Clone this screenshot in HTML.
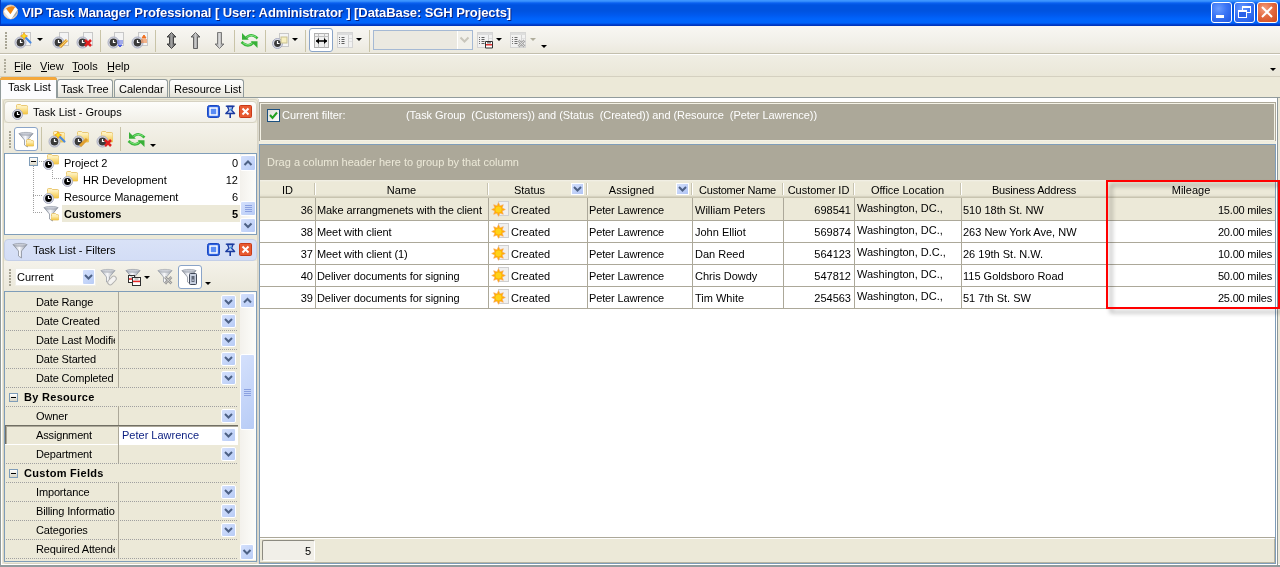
<!DOCTYPE html><html><head><meta charset="utf-8"><style>
*{box-sizing:border-box}
html,body{margin:0;padding:0;width:1280px;height:567px;overflow:hidden;background:#ECE9D8;font-family:"Liberation Sans", sans-serif;font-size:11px;color:#000}
.abs,.ic,.t{position:absolute}
.t{white-space:pre;line-height:13px;letter-spacing:0px;will-change:transform}
.ic{overflow:visible}
</style></head><body>
<svg width="0" height="0" style="position:absolute"><defs>
<linearGradient id="gfold" x1="0" y1="0" x2="0" y2="1"><stop offset="0" stop-color="#fff6d0"/><stop offset="1" stop-color="#f6d878"/></linearGradient>
<linearGradient id="gfold2" x1="0" y1="0" x2="0" y2="1"><stop offset="0" stop-color="#fff0b8"/><stop offset="1" stop-color="#f2c440"/></linearGradient>
<linearGradient id="gfun" x1="0" y1="0" x2="1" y2="0"><stop offset="0" stop-color="#9aa2b0"/><stop offset="0.45" stop-color="#fafbff"/><stop offset="1" stop-color="#8890a0"/></linearGradient>
</defs></svg>
<div class="abs" style="left:0;top:0;width:1280px;height:26px;background:linear-gradient(#3d95ff 0px,#3d95ff 1px,#0a60f0 3px,#0053e0 5px,#0053e0 11px,#0059ee 15px,#0064fc 19px,#0064fa 23px,#0040d0 24.5px,#0030b0 26px)"></div>
<div class="abs" style="left:0;top:0;width:1px;height:26px;background:#0038c0"></div>
<svg class="ic" style="left:3px;top:4px" width="15" height="16" viewBox="0 0 15 16" ><circle cx="7.5" cy="8" r="7" fill="#e4e0dc" stroke="#f4c89c" stroke-width="0.8"/><path d="M13.5 6.5 L8.5 14.5 Q12.5 13 14.2 9z" fill="#a8a8a8"/><path d="M2.2 6.2 L7.5 13 L13.2 4.2" stroke="#fff" stroke-width="3.6" fill="none" stroke-linejoin="round"/><path d="M3 4.5 Q7 1 12.2 2.8 L7.5 10.2z" fill="#f08a18"/></svg>
<div class="t" style="left:22px;top:6px;font-weight:bold;font-size:13px;color:#fff;letter-spacing:-0.08px;text-shadow:1px 1px 0 #0a1e78">VIP Task Manager Professional [ User: Administrator ] [DataBase: SGH Projects]</div>
<div class="abs" style="left:1211px;top:2px;width:21px;height:21px;border:1px solid #fff;border-radius:3px;background:radial-gradient(circle at 35% 30%,#6a9cff 0,#3a74f5 45%,#1e57e0 100%)"></div>
<svg class="ic" style="left:1211px;top:2px" width="21" height="21" viewBox="0 0 21 21" ><rect x="5" y="13" width="8" height="3" fill="#fff"/></svg>
<div class="abs" style="left:1234px;top:2px;width:21px;height:21px;border:1px solid #fff;border-radius:3px;background:radial-gradient(circle at 35% 30%,#6a9cff 0,#3a74f5 45%,#1e57e0 100%)"></div>
<svg class="ic" style="left:1234px;top:2px" width="21" height="21" viewBox="0 0 21 21" ><rect x="8.5" y="4.5" width="8" height="6" fill="none" stroke="#fff" stroke-width="1"/><rect x="8" y="4" width="9" height="2" fill="#fff"/><rect x="4.5" y="8.5" width="8" height="7" fill="#2a62e8" stroke="#fff"/><rect x="4" y="8" width="9" height="2" fill="#fff"/></svg>
<div class="abs" style="left:1257px;top:2px;width:21px;height:21px;border:1px solid #fff;border-radius:3px;background:radial-gradient(circle at 35% 30%,#f4a080 0,#e36a40 45%,#cf4a1c 100%)"></div>
<svg class="ic" style="left:1257px;top:2px" width="21" height="21" viewBox="0 0 21 21" ><path d="M5 5l10 10M15 5l-10 10" stroke="#fff" stroke-width="2"/></svg>
<div class="abs" style="left:0;top:26px;width:1280px;height:28px;background:linear-gradient(#f8f7f3,#f1efe8 60%,#ebe8dc)"></div>
<div class="abs" style="left:0;top:53px;width:1280px;height:1px;background:#c3bfae"></div>
<div class="abs" style="left:0;top:54px;width:1280px;height:1px;background:#fff"></div>
<div class="abs" style="left:5px;top:32px;width:2px;height:2px;background:#a8a595"></div>
<div class="abs" style="left:5px;top:35px;width:2px;height:2px;background:#a8a595"></div>
<div class="abs" style="left:5px;top:38px;width:2px;height:2px;background:#a8a595"></div>
<div class="abs" style="left:5px;top:41px;width:2px;height:2px;background:#a8a595"></div>
<div class="abs" style="left:5px;top:44px;width:2px;height:2px;background:#a8a595"></div>
<div class="abs" style="left:5px;top:47px;width:2px;height:2px;background:#a8a595"></div>
<svg class="ic" style="left:14px;top:32px" width="17" height="17" viewBox="0 0 17 17" ><rect x="7.5" y="0.5" width="9" height="13" fill="#f4f4f4" stroke="#c8c8c8"/><circle cx="6.5" cy="10.5" r="5.5" fill="#dcdee8" stroke="#a8acc0" stroke-width="1"/><circle cx="6.5" cy="10.5" r="3.9" fill="#3a3a3a"/><path d="M6.5 8V10.5H8.5" stroke="#fff" stroke-width="1.2" fill="none"/><path d="M12 6l4.5 4.5" stroke="#4a8ae0" stroke-width="2.2" stroke-linecap="round"/><path d="M10 0.5l1.2 2.3 2.3 1.2-2.3 1.2-1.2 2.3-1.2-2.3-2.3-1.2 2.3-1.2z" fill="#f8e020" stroke="#f09020" stroke-width=".7"/></svg>
<div class="abs" style="left:37px;top:38px;width:0;height:0;border-left:3px solid transparent;border-right:3px solid transparent;border-top:3px solid #000"></div>
<svg class="ic" style="left:52px;top:32px" width="17" height="17" viewBox="0 0 17 17" ><rect x="7.5" y="0.5" width="9" height="13" fill="#f4f4f4" stroke="#c8c8c8"/><circle cx="6.5" cy="10.5" r="5.5" fill="#dcdee8" stroke="#a8acc0" stroke-width="1"/><circle cx="6.5" cy="10.5" r="3.9" fill="#3a3a3a"/><path d="M6.5 8V10.5H8.5" stroke="#fff" stroke-width="1.2" fill="none"/><path d="M8 15l7-7" stroke="#e0a030" stroke-width="3"/><path d="M8 15l7-7" stroke="#f8d070" stroke-width="1"/></svg>
<svg class="ic" style="left:76px;top:32px" width="17" height="17" viewBox="0 0 17 17" ><rect x="7.5" y="0.5" width="9" height="13" fill="#f4f4f4" stroke="#c8c8c8"/><circle cx="6.5" cy="10.5" r="5.5" fill="#dcdee8" stroke="#a8acc0" stroke-width="1"/><circle cx="6.5" cy="10.5" r="3.9" fill="#3a3a3a"/><path d="M6.5 8V10.5H8.5" stroke="#fff" stroke-width="1.2" fill="none"/><path d="M9 8l6 6M15 8l-6 6" stroke="#e02020" stroke-width="2.5"/></svg>
<div class="abs" style="left:100px;top:30px;width:1px;height:22px;background:#c9c4a8"></div>
<svg class="ic" style="left:107px;top:32px" width="17" height="17" viewBox="0 0 17 17" ><rect x="7.5" y="0.5" width="9" height="13" fill="#f4f4f4" stroke="#c8c8c8"/><circle cx="6.5" cy="10.5" r="5.5" fill="#dcdee8" stroke="#a8acc0" stroke-width="1"/><circle cx="6.5" cy="10.5" r="3.9" fill="#3a3a3a"/><path d="M6.5 8V10.5H8.5" stroke="#fff" stroke-width="1.2" fill="none"/><path d="M10 9h6M10 11h6M11 13h4l-2 2z" stroke="#5060e0" stroke-width="1" fill="#5060e0"/></svg>
<svg class="ic" style="left:131px;top:32px" width="17" height="17" viewBox="0 0 17 17" ><rect x="7.5" y="0.5" width="9" height="13" fill="#f4f4f4" stroke="#c8c8c8"/><circle cx="6.5" cy="10.5" r="5.5" fill="#dcdee8" stroke="#a8acc0" stroke-width="1"/><circle cx="6.5" cy="10.5" r="3.9" fill="#3a3a3a"/><path d="M6.5 8V10.5H8.5" stroke="#fff" stroke-width="1.2" fill="none"/><path d="M10 8h6M10 10h6M11 6h4l-2 -3z" stroke="#f07020" stroke-width="1" fill="#f07020"/></svg>
<div class="abs" style="left:155px;top:30px;width:1px;height:22px;background:#c9c4a8"></div>
<svg class="ic" style="left:166px;top:32px" width="11" height="17" viewBox="0 0 11 17" ><defs><linearGradient id="g1" x1="0" x2="1"><stop offset="0" stop-color="#505050"/><stop offset="0.5" stop-color="#a0a0a0"/><stop offset="1" stop-color="#404040"/></linearGradient></defs><path d="M5.5 0.5L10 5H7.5V12H10L5.5 16.5 1 12H3.5V5H1Z" fill="url(#g1)" stroke="#383838" stroke-width="0.9"/></svg>
<svg class="ic" style="left:190px;top:32px" width="11" height="17" viewBox="0 0 11 17" ><defs><linearGradient id="g2" x1="0" x2="1"><stop offset="0" stop-color="#707070"/><stop offset="0.5" stop-color="#c8c8c8"/><stop offset="1" stop-color="#606060"/></linearGradient></defs><path d="M5.5 0.5L10 5H7.5V16.5H3.5V5H1Z" fill="url(#g2)" stroke="#585858" stroke-width="0.9"/></svg>
<svg class="ic" style="left:214px;top:32px" width="11" height="17" viewBox="0 0 11 17" ><defs><linearGradient id="g3" x1="0" x2="1"><stop offset="0" stop-color="#888"/><stop offset="0.5" stop-color="#d8d8d8"/><stop offset="1" stop-color="#808080"/></linearGradient></defs><path d="M5.5 16.5L10 12H7.5V0.5H3.5V12H1Z" fill="url(#g3)" stroke="#707070" stroke-width="0.9"/></svg>
<div class="abs" style="left:234px;top:30px;width:1px;height:22px;background:#c9c4a8"></div>
<svg class="ic" style="left:241px;top:32px" width="17" height="17" viewBox="0 0 17 17" ><path d="M4.5 6.5Q10 0 16.5 6.5" stroke="#3cb83c" stroke-width="2.6" fill="none"/><path d="M5 5.8Q10 1.5 15 5" stroke="#90f090" stroke-width="0.8" fill="none"/><path d="M1 1V7.8H7.8Z" fill="#38b038"/><path d="M0.5 10Q7 16.5 12.5 10.5" stroke="#3cb83c" stroke-width="2.6" fill="none"/><path d="M2 10.8Q7 15 11.5 11" stroke="#90f090" stroke-width="0.8" fill="none"/><path d="M16.5 16V9.2H9.7Z" fill="#38b038"/></svg>
<div class="abs" style="left:265px;top:30px;width:1px;height:22px;background:#c9c4a8"></div>
<svg class="ic" style="left:272px;top:32px" width="17" height="17" viewBox="0 0 17 17" ><rect x="7.5" y="1.5" width="9" height="13" fill="#f4f4f4" stroke="#c8c8c8"/><circle cx="5.5" cy="11.5" r="5" fill="#dcdee8" stroke="#a8acc0" stroke-width="1"/><circle cx="5.5" cy="11.5" r="3.4" fill="#3a3a3a"/><path d="M5.5 9V11.5H7.5" stroke="#fff" stroke-width="1.2" fill="none"/><rect x="9" y="5" width="6" height="6" fill="#f8f0c0" stroke="#c8c090"/></svg>
<div class="abs" style="left:292px;top:38px;width:0;height:0;border-left:3px solid transparent;border-right:3px solid transparent;border-top:3px solid #000"></div>
<div class="abs" style="left:305px;top:30px;width:1px;height:22px;background:#c9c4a8"></div>
<div class="abs" style="left:309px;top:28px;width:24px;height:24px;border:1px solid #8aa4c8;border-radius:3px;background:#fff"></div>
<svg class="ic" style="left:313px;top:32px" width="17" height="17" viewBox="0 0 17 17" ><rect x="1.5" y="1.5" width="14" height="14" fill="#f0f0f0" stroke="#b0b0b0"/><path d="M1.5 4.5h14M5.5 1.5v14M11.5 1.5v14" stroke="#c0c0c0"/><path d="M3 9h11" stroke="#000" stroke-width="1.5"/><path d="M3 9l3-3v6zM14 9l-3-3v6z" fill="#000"/></svg>
<svg class="ic" style="left:337px;top:32px" width="17" height="17" viewBox="0 0 17 17" ><rect x="0.5" y="0.5" width="15" height="15" fill="#f2f2f2" stroke="#d4d4d4"/><rect x="1" y="1" width="14" height="2" fill="#dcdcdc"/><path d="M11.5 3v12" stroke="#d0d0d0"/><path d="M12 6.5h3M12 9.5h3" stroke="#e0e0e0"/><path d="M2 5.5h1M2 7.5h1M2 9.5h1M2 11.5h1" stroke="#707070"/><path d="M4.5 5.5h3M4.5 7.5h3M4.5 9.5h3M4.5 11.5h3" stroke="#606060" stroke-width="1.2"/></svg>
<div class="abs" style="left:356px;top:38px;width:0;height:0;border-left:3px solid transparent;border-right:3px solid transparent;border-top:3px solid #000"></div>
<div class="abs" style="left:369px;top:30px;width:1px;height:22px;background:#c9c4a8"></div>
<div class="abs" style="left:373px;top:30px;width:100px;height:20px;border:1px solid #a5b9d4;background:#ebe9e1"></div>
<div class="abs" style="left:457px;top:31px;width:15px;height:18px;background:#f1f0ea;border-left:1px solid #fff"></div>
<svg class="ic" style="left:459px;top:36px" width="11" height="8" viewBox="0 0 11 8" ><path d="M1.5 1.5l4 4 4-4" stroke="#c8c6bc" stroke-width="2" fill="none"/></svg>
<svg class="ic" style="left:477px;top:32px" width="17" height="17" viewBox="0 0 17 17" ><rect x="0.5" y="0.5" width="15" height="15" fill="#f2f2f2" stroke="#d4d4d4"/><rect x="1" y="1" width="14" height="2" fill="#dcdcdc"/><path d="M11.5 3v12" stroke="#d0d0d0"/><path d="M12 6.5h3M12 9.5h3" stroke="#e0e0e0"/><path d="M2 5.5h1M2 7.5h1M2 9.5h1M2 11.5h1" stroke="#707070"/><path d="M4.5 5.5h3M4.5 7.5h3M4.5 9.5h3M4.5 11.5h3" stroke="#606060" stroke-width="1.2"/><path d="M8.5 16V9.5H15.5V16Z" fill="#fff" stroke="#303030"/><rect x="9" y="12" width="6" height="1.5" fill="#e03030"/><rect x="10" y="10" width="4" height="1.5" fill="#808080"/></svg>
<div class="abs" style="left:496px;top:38px;width:0;height:0;border-left:3px solid transparent;border-right:3px solid transparent;border-top:3px solid #000"></div>
<svg class="ic" style="left:510px;top:32px" width="17" height="17" viewBox="0 0 17 17" opacity="0.9"><rect x="0.5" y="0.5" width="15" height="15" fill="#f2f2f2" stroke="#d4d4d4"/><rect x="1" y="1" width="14" height="2" fill="#dcdcdc"/><path d="M11.5 3v12" stroke="#d0d0d0"/><path d="M12 6.5h3M12 9.5h3" stroke="#e0e0e0"/><path d="M2 5.5h1M2 7.5h1M2 9.5h1M2 11.5h1" stroke="#707070"/><path d="M4.5 5.5h3M4.5 7.5h3M4.5 9.5h3M4.5 11.5h3" stroke="#606060" stroke-width="1.2"/><path d="M8.5 8.5l6 6M14.5 8.5l-6 6" stroke="#a0a0a0" stroke-width="2.6"/><path d="M8.5 8.5l6 6M14.5 8.5l-6 6" stroke="#e8e8e8" stroke-width="0.8"/></svg>
<div class="abs" style="left:530px;top:38px;width:0;height:0;border-left:3px solid transparent;border-right:3px solid transparent;border-top:3px solid #b0ad9c"></div>
<div class="abs" style="left:541px;top:45px;width:0;height:0;border-left:3px solid transparent;border-right:3px solid transparent;border-top:3px solid #000"></div>
<div class="abs" style="left:0;top:55px;width:1280px;height:21px;background:linear-gradient(#f0eee4,#eae7d8)"></div>
<div class="abs" style="left:0;top:76px;width:1280px;height:1px;background:#d4d0c0"></div>
<div class="abs" style="left:4px;top:59px;width:2px;height:2px;background:#b0ad9c"></div>
<div class="abs" style="left:4px;top:62px;width:2px;height:2px;background:#b0ad9c"></div>
<div class="abs" style="left:4px;top:65px;width:2px;height:2px;background:#b0ad9c"></div>
<div class="abs" style="left:4px;top:68px;width:2px;height:2px;background:#b0ad9c"></div>
<div class="abs" style="left:4px;top:71px;width:2px;height:2px;background:#b0ad9c"></div>
<div class="t" style="left:14px;top:60px">File</div>
<div class="abs" style="left:15px;top:71px;width:6px;height:1px;background:#000"></div>
<div class="t" style="left:40px;top:60px">View</div>
<div class="abs" style="left:41px;top:71px;width:6px;height:1px;background:#000"></div>
<div class="t" style="left:72px;top:60px">Tools</div>
<div class="abs" style="left:73px;top:71px;width:6px;height:1px;background:#000"></div>
<div class="t" style="left:107px;top:60px">Help</div>
<div class="abs" style="left:108px;top:71px;width:6px;height:1px;background:#000"></div>
<div class="abs" style="left:1270px;top:68px;width:0;height:0;border-left:3px solid transparent;border-right:3px solid transparent;border-top:3px solid #000"></div>
<div class="abs" style="left:0;top:97px;width:1280px;height:1px;background:#919b9c"></div>

<div class="abs" style="left:57px;top:79px;width:56px;height:18px;background:linear-gradient(#fefefe,#f3f2ec 60%,#e4e2d8);border:1px solid #919b9c;border-bottom:none;border-radius:3px 3px 0 0"></div>
<div class="abs" style="left:114px;top:79px;width:54px;height:18px;background:linear-gradient(#fefefe,#f3f2ec 60%,#e4e2d8);border:1px solid #919b9c;border-bottom:none;border-radius:3px 3px 0 0"></div>
<div class="abs" style="left:169px;top:79px;width:75px;height:18px;background:linear-gradient(#fefefe,#f3f2ec 60%,#e4e2d8);border:1px solid #919b9c;border-bottom:none;border-radius:3px 3px 0 0"></div>
<div class="abs" style="left:0px;top:77px;width:57px;height:21px;background:#fcfcfe;border:1px solid #919b9c;border-bottom:none;border-radius:3px 3px 0 0"></div>
<div class="abs" style="left:0px;top:77px;width:57px;height:3px;background:#f4a83a;border-radius:3px 3px 0 0"></div>
<div class="abs" style="left:1px;top:97px;width:55px;height:2px;background:#fcfcfe"></div>
<div class="t" style="left:8px;top:81px">Task List</div>
<div class="t" style="left:61px;top:83px">Task Tree</div>
<div class="t" style="left:119px;top:83px">Calendar</div>
<div class="t" style="left:174px;top:83px">Resource List</div>
<div class="abs" style="left:0;top:98px;width:1px;height:469px;background:#919b9c"></div>
<div class="abs" style="left:1px;top:98px;width:1px;height:467px;background:#fff"></div>
<div class="abs" style="left:0;top:565px;width:1280px;height:2px;background:#919b9c"></div>
<div class="abs" style="left:1px;top:564px;width:1279px;height:1px;background:#fff"></div>
<div class="abs" style="left:3px;top:99px;width:255px;height:465px;border:1px solid #d8d4c4;border-radius:3px"></div>
<div class="abs" style="left:4px;top:101px;width:253px;height:22px;border:1px solid #d6d2c2;border-radius:4px;background:linear-gradient(#fdfdfb,#f1efe7)"></div>
<svg class="ic" style="left:12px;top:104px" width="17" height="17" viewBox="0 0 17 17" ><path d="M4.5 10V1.5Q4.5 0.5 5.5 0.5H8.5L9.5 1.5H14.5Q15.5 1.5 15.5 2.5V10Z" fill="url(#gfold)" stroke="#e4bc58" stroke-width="0.8"/><rect x="4.5" y="3" width="11" height="7" fill="url(#gfold2)" rx="0.5"/><circle cx="5.5" cy="10.5" r="5" fill="#dcdee8" stroke="#a8acc0" stroke-width="1"/><circle cx="5.5" cy="10.5" r="3.4" fill="#000"/><path d="M5.5 8V10.5H7.5" stroke="#fff" stroke-width="1.2" fill="none"/></svg>
<div class="t" style="left:33px;top:106px">Task List - Groups</div>
<svg class="ic" style="left:207px;top:105px" width="13" height="13" viewBox="0 0 13 13" ><rect x="0.5" y="0.5" width="12" height="12" rx="2" fill="#2c62e0" stroke="#1c48c0"/><rect x="3" y="3" width="7" height="7" fill="#5a8cf4" stroke="#fff" stroke-width="1.5"/></svg>
<svg class="ic" style="left:224px;top:105px" width="12" height="13" viewBox="0 0 12 13" ><path d="M3.5 1.5L5 5.2 1.8 8.5H10.6L7.6 5.2 9 1.5Z" fill="#c8d8f8" stroke="#1a3aa0" stroke-width="1.3" stroke-linejoin="round"/><path d="M1.8 1.2H10.6" stroke="#1a3aa0" stroke-width="1.4"/><path d="M6.2 8.5V13" stroke="#1a3aa0" stroke-width="1.6"/><circle cx="6.8" cy="4.5" r="1" fill="#40a0e0"/></svg>
<svg class="ic" style="left:239px;top:105px" width="13" height="13" viewBox="0 0 13 13" ><rect x="0.5" y="0.5" width="12" height="12" rx="1" fill="#e85a30" stroke="#c83a18"/><path d="M3.5 3.5l6 6M9.5 3.5l-6 6" stroke="#fff" stroke-width="2"/></svg>
<div class="abs" style="left:4px;top:123px;width:253px;height:30px;background:linear-gradient(#f4f2ea,#ebe8da)"></div>
<div class="abs" style="left:9px;top:131px;width:2px;height:2px;background:#a8a595"></div>
<div class="abs" style="left:9px;top:134px;width:2px;height:2px;background:#a8a595"></div>
<div class="abs" style="left:9px;top:137px;width:2px;height:2px;background:#a8a595"></div>
<div class="abs" style="left:9px;top:140px;width:2px;height:2px;background:#a8a595"></div>
<div class="abs" style="left:9px;top:143px;width:2px;height:2px;background:#a8a595"></div>
<div class="abs" style="left:9px;top:146px;width:2px;height:2px;background:#a8a595"></div>
<div class="abs" style="left:14px;top:127px;width:24px;height:24px;border:1px solid #8aa4c8;border-radius:3px;background:#fff"></div>
<svg class="ic" style="left:18px;top:131px" width="17" height="17" viewBox="0 0 17 17" ><path d="M1 2.5H15L9.5 9V16L6.5 14V9Z" fill="url(#gfun)" stroke="#8a909c" stroke-width="0.8"/><ellipse cx="8" cy="2.8" rx="6.8" ry="1.4" fill="#c8ccd6" stroke="#8a909c" stroke-width="0.6"/><path d="M8.5 15V9.5Q8.5 8.5 9.5 8.5H12.5L13.5 9.5H14.5Q15.5 9.5 15.5 10.5V15Z" fill="url(#gfold)" stroke="#e4bc58" stroke-width="0.8"/><rect x="8.5" y="11" width="7" height="4" fill="url(#gfold2)" rx="0.5"/></svg>
<div class="abs" style="left:41px;top:127px;width:1px;height:24px;background:#c9c4a8"></div>
<svg class="ic" style="left:48px;top:131px" width="17" height="17" viewBox="0 0 17 17" ><path d="M5.5 11V1.5Q5.5 0.5 6.5 0.5H9.5L10.5 1.5H15.5Q16.5 1.5 16.5 2.5V11Z" fill="url(#gfold)" stroke="#e4bc58" stroke-width="0.8"/><rect x="5.5" y="3" width="11" height="8" fill="url(#gfold2)" rx="0.5"/><circle cx="6.5" cy="10.5" r="5.5" fill="#dcdee8" stroke="#a8acc0" stroke-width="1"/><circle cx="6.5" cy="10.5" r="3.9" fill="#3a3a3a"/><path d="M6.5 8V10.5H8.5" stroke="#fff" stroke-width="1.2" fill="none"/><path d="M12 6l4.5 4.5" stroke="#4a8ae0" stroke-width="2.2" stroke-linecap="round"/><path d="M10 0.5l1.2 2.3 2.3 1.2-2.3 1.2-1.2 2.3-1.2-2.3-2.3-1.2 2.3-1.2z" fill="#f8e020" stroke="#f09020" stroke-width=".7"/></svg>
<svg class="ic" style="left:72px;top:131px" width="17" height="17" viewBox="0 0 17 17" ><path d="M5.5 11V1.5Q5.5 0.5 6.5 0.5H9.5L10.5 1.5H15.5Q16.5 1.5 16.5 2.5V11Z" fill="url(#gfold)" stroke="#e4bc58" stroke-width="0.8"/><rect x="5.5" y="3" width="11" height="8" fill="url(#gfold2)" rx="0.5"/><circle cx="6.5" cy="10.5" r="5.5" fill="#dcdee8" stroke="#a8acc0" stroke-width="1"/><circle cx="6.5" cy="10.5" r="3.9" fill="#3a3a3a"/><path d="M6.5 8V10.5H8.5" stroke="#fff" stroke-width="1.2" fill="none"/><path d="M8 15l7-7" stroke="#e0a030" stroke-width="3"/></svg>
<svg class="ic" style="left:96px;top:131px" width="17" height="17" viewBox="0 0 17 17" ><path d="M5.5 11V1.5Q5.5 0.5 6.5 0.5H9.5L10.5 1.5H15.5Q16.5 1.5 16.5 2.5V11Z" fill="url(#gfold)" stroke="#e4bc58" stroke-width="0.8"/><rect x="5.5" y="3" width="11" height="8" fill="url(#gfold2)" rx="0.5"/><circle cx="6.5" cy="10.5" r="5.5" fill="#dcdee8" stroke="#a8acc0" stroke-width="1"/><circle cx="6.5" cy="10.5" r="3.9" fill="#3a3a3a"/><path d="M6.5 8V10.5H8.5" stroke="#fff" stroke-width="1.2" fill="none"/><path d="M9 9l6 6M15 9l-6 6" stroke="#e02020" stroke-width="2.5"/></svg>
<div class="abs" style="left:120px;top:127px;width:1px;height:24px;background:#c9c4a8"></div>
<svg class="ic" style="left:128px;top:131px" width="17" height="17" viewBox="0 0 17 17" ><path d="M4.5 6.5Q10 0 16.5 6.5" stroke="#3cb83c" stroke-width="2.6" fill="none"/><path d="M5 5.8Q10 1.5 15 5" stroke="#90f090" stroke-width="0.8" fill="none"/><path d="M1 1V7.8H7.8Z" fill="#38b038"/><path d="M0.5 10Q7 16.5 12.5 10.5" stroke="#3cb83c" stroke-width="2.6" fill="none"/><path d="M2 10.8Q7 15 11.5 11" stroke="#90f090" stroke-width="0.8" fill="none"/><path d="M16.5 16V9.2H9.7Z" fill="#38b038"/></svg>
<div class="abs" style="left:150px;top:144px;width:0;height:0;border-left:3px solid transparent;border-right:3px solid transparent;border-top:3px solid #000"></div>
<div class="abs" style="left:4px;top:153px;width:253px;height:82px;border:1px solid #7f9db9;background:#fff"></div>
<div class="abs" style="left:62px;top:205px;width:178px;height:17px;background:#ece9d8"></div>
<div class="abs" style="left:33px;top:166px;width:1px;height:47px;background:repeating-linear-gradient(#a0a0a0 0 1px,transparent 1px 2px)"></div>
<div class="abs" style="left:33px;top:212px;width:10px;height:1px;background:repeating-linear-gradient(90deg,#a0a0a0 0 1px,transparent 1px 2px)"></div>
<div class="abs" style="left:33px;top:195px;width:10px;height:1px;background:repeating-linear-gradient(90deg,#a0a0a0 0 1px,transparent 1px 2px)"></div>
<div class="abs" style="left:39px;top:161px;width:5px;height:1px;background:repeating-linear-gradient(90deg,#a0a0a0 0 1px,transparent 1px 2px)"></div>
<div class="abs" style="left:52px;top:170px;width:1px;height:9px;background:repeating-linear-gradient(#a0a0a0 0 1px,transparent 1px 2px)"></div>
<div class="abs" style="left:52px;top:178px;width:10px;height:1px;background:repeating-linear-gradient(90deg,#a0a0a0 0 1px,transparent 1px 2px)"></div>
<div class="abs" style="left:29px;top:157px;width:9px;height:9px;border:1px solid #7f9db9;background:linear-gradient(#fff,#dcd8c8)"></div><div class="abs" style="left:31px;top:161px;width:5px;height:1px;background:#000"></div>
<svg class="ic" style="left:43px;top:154px" width="17" height="17" viewBox="0 0 17 17" ><path d="M4.5 10V1.5Q4.5 0.5 5.5 0.5H8.5L9.5 1.5H14.5Q15.5 1.5 15.5 2.5V10Z" fill="url(#gfold)" stroke="#e4bc58" stroke-width="0.8"/><rect x="4.5" y="3" width="11" height="7" fill="url(#gfold2)" rx="0.5"/><circle cx="5.5" cy="10.5" r="5" fill="#dcdee8" stroke="#a8acc0" stroke-width="1"/><circle cx="5.5" cy="10.5" r="3.4" fill="#000"/><path d="M5.5 8V10.5H7.5" stroke="#fff" stroke-width="1.2" fill="none"/></svg>
<svg class="ic" style="left:62px;top:171px" width="17" height="17" viewBox="0 0 17 17" ><path d="M4.5 10V1.5Q4.5 0.5 5.5 0.5H8.5L9.5 1.5H14.5Q15.5 1.5 15.5 2.5V10Z" fill="url(#gfold)" stroke="#e4bc58" stroke-width="0.8"/><rect x="4.5" y="3" width="11" height="7" fill="url(#gfold2)" rx="0.5"/><circle cx="5.5" cy="10.5" r="5" fill="#dcdee8" stroke="#a8acc0" stroke-width="1"/><circle cx="5.5" cy="10.5" r="3.4" fill="#000"/><path d="M5.5 8V10.5H7.5" stroke="#fff" stroke-width="1.2" fill="none"/></svg>
<svg class="ic" style="left:43px;top:188px" width="17" height="17" viewBox="0 0 17 17" ><path d="M4.5 10V1.5Q4.5 0.5 5.5 0.5H8.5L9.5 1.5H14.5Q15.5 1.5 15.5 2.5V10Z" fill="url(#gfold)" stroke="#e4bc58" stroke-width="0.8"/><rect x="4.5" y="3" width="11" height="7" fill="url(#gfold2)" rx="0.5"/><circle cx="5.5" cy="10.5" r="5" fill="#dcdee8" stroke="#a8acc0" stroke-width="1"/><circle cx="5.5" cy="10.5" r="3.4" fill="#000"/><path d="M5.5 8V10.5H7.5" stroke="#fff" stroke-width="1.2" fill="none"/></svg>
<svg class="ic" style="left:43px;top:205px" width="17" height="17" viewBox="0 0 17 17" ><path d="M1 2.5H15L9.5 9V16L6.5 14V9Z" fill="url(#gfun)" stroke="#8a909c" stroke-width="0.8"/><ellipse cx="8" cy="2.8" rx="6.8" ry="1.4" fill="#c8ccd6" stroke="#8a909c" stroke-width="0.6"/><path d="M8.5 15V9.5Q8.5 8.5 9.5 8.5H12.5L13.5 9.5H14.5Q15.5 9.5 15.5 10.5V15Z" fill="url(#gfold)" stroke="#e4bc58" stroke-width="0.8"/><rect x="8.5" y="11" width="7" height="4" fill="url(#gfold2)" rx="0.5"/></svg>
<div class="t" style="left:64px;top:157px">Project 2</div><div class="t" style="left:83px;top:174px">HR Development</div><div class="t" style="left:64px;top:191px">Resource Management</div><div class="t" style="left:64px;top:208px;font-weight:bold">Customers</div>
<div class="t" style="left:180px;width:58px;text-align:right;top:157px;">0</div>
<div class="t" style="left:180px;width:58px;text-align:right;top:174px;">12</div>
<div class="t" style="left:180px;width:58px;text-align:right;top:191px;">6</div>
<div class="t" style="left:180px;width:58px;text-align:right;top:208px;font-weight:bold;">5</div>
<div class="abs" style="left:240px;top:154px;width:16px;height:80px;background:linear-gradient(90deg,#f3f1ec,#fdfdfa)"></div>
<div class="abs" style="left:240px;top:155px;width:16px;height:16px;border:1px solid #fff;border-radius:2px;background:linear-gradient(135deg,#d4e0fc,#b8ccf6)"></div>
<svg class="ic" style="left:240px;top:155px" width="16" height="16" viewBox="0 0 16 16" ><path d="M4.5 10.0l3.5-3.5 3.5 3.5" stroke="#4d6185" stroke-width="2" fill="none"/></svg>
<div class="abs" style="left:240px;top:201px;width:16px;height:15px;border:1px solid #fff;border-radius:2px;background:linear-gradient(135deg,#d4e0fc,#b8ccf6)"></div>
<svg class="ic" style="left:240px;top:201px" width="16" height="15" viewBox="0 0 16 15" ><path d="M5 4.5h7" stroke="#8aa0e0" stroke-width="1"/><path d="M5 6.5h7" stroke="#8aa0e0" stroke-width="1"/><path d="M5 8.5h7" stroke="#8aa0e0" stroke-width="1"/><path d="M5 10.5h7" stroke="#8aa0e0" stroke-width="1"/></svg>
<div class="abs" style="left:240px;top:218px;width:16px;height:15px;border:1px solid #fff;border-radius:2px;background:linear-gradient(135deg,#d4e0fc,#b8ccf6)"></div>
<svg class="ic" style="left:240px;top:218px" width="16" height="15" viewBox="0 0 16 15" ><path d="M4.5 5.5l3.5 3.5 3.5-3.5" stroke="#4d6185" stroke-width="2" fill="none"/></svg>
<div class="abs" style="left:4px;top:239px;width:253px;height:22px;border:1px solid #c4cfe8;border-radius:4px;background:linear-gradient(#d9e2f7,#d3ddf6)"></div>
<svg class="ic" style="left:12px;top:242px" width="17" height="17" viewBox="0 0 17 17" ><path d="M1 2.5H15L9.5 9V16L6.5 14V9Z" fill="url(#gfun)" stroke="#8a909c" stroke-width="0.8"/><ellipse cx="8" cy="2.8" rx="6.8" ry="1.4" fill="#c8ccd6" stroke="#8a909c" stroke-width="0.6"/></svg>
<div class="t" style="left:33px;top:244px">Task List - Filters</div>
<svg class="ic" style="left:207px;top:243px" width="13" height="13" viewBox="0 0 13 13" ><rect x="0.5" y="0.5" width="12" height="12" rx="2" fill="#2c62e0" stroke="#1c48c0"/><rect x="3" y="3" width="7" height="7" fill="#5a8cf4" stroke="#fff" stroke-width="1.5"/></svg>
<svg class="ic" style="left:224px;top:243px" width="12" height="13" viewBox="0 0 12 13" ><path d="M3.5 1.5L5 5.2 1.8 8.5H10.6L7.6 5.2 9 1.5Z" fill="#c8d8f8" stroke="#1a3aa0" stroke-width="1.3" stroke-linejoin="round"/><path d="M1.8 1.2H10.6" stroke="#1a3aa0" stroke-width="1.4"/><path d="M6.2 8.5V13" stroke="#1a3aa0" stroke-width="1.6"/><circle cx="6.8" cy="4.5" r="1" fill="#40a0e0"/></svg>
<svg class="ic" style="left:239px;top:243px" width="13" height="13" viewBox="0 0 13 13" ><rect x="0.5" y="0.5" width="12" height="12" rx="1" fill="#e85a30" stroke="#c83a18"/><path d="M3.5 3.5l6 6M9.5 3.5l-6 6" stroke="#fff" stroke-width="2"/></svg>
<div class="abs" style="left:4px;top:261px;width:253px;height:30px;background:linear-gradient(#f4f2ea,#ebe8da)"></div>
<div class="abs" style="left:9px;top:269px;width:2px;height:2px;background:#a8a595"></div>
<div class="abs" style="left:9px;top:272px;width:2px;height:2px;background:#a8a595"></div>
<div class="abs" style="left:9px;top:275px;width:2px;height:2px;background:#a8a595"></div>
<div class="abs" style="left:9px;top:278px;width:2px;height:2px;background:#a8a595"></div>
<div class="abs" style="left:9px;top:281px;width:2px;height:2px;background:#a8a595"></div>
<div class="abs" style="left:9px;top:284px;width:2px;height:2px;background:#a8a595"></div>
<div class="abs" style="left:15px;top:268px;width:81px;height:18px;background:#fff;border:1px solid #f0efe8"></div>
<div class="t" style="left:17px;top:271px">Current</div>
<div class="abs" style="left:82px;top:269px;width:13px;height:16px;border:1px solid #fff;border-radius:2px;background:linear-gradient(135deg,#d4e0fc,#b8ccf6)"></div>
<svg class="ic" style="left:82px;top:269px" width="13" height="16" viewBox="0 0 13 16" ><path d="M3.0 6.0l3.5 3.5 3.5-3.5" stroke="#4d6185" stroke-width="2" fill="none"/></svg>
<svg class="ic" style="left:100px;top:268px" width="17" height="17" viewBox="0 0 17 17" opacity="0.85"><path d="M1 2.5H15L9.5 9V16L6.5 14V9Z" fill="url(#gfun)" stroke="#8a909c" stroke-width="0.8"/><ellipse cx="8" cy="2.8" rx="6.8" ry="1.4" fill="#c8ccd6" stroke="#8a909c" stroke-width="0.6"/><rect x="7" y="10" width="10" height="5" rx="2.5" fill="#f4f4f4" stroke="#a8a8a8" transform="rotate(-45 12 12.5)"/></svg>
<svg class="ic" style="left:125px;top:268px" width="17" height="17" viewBox="0 0 17 17" ><path d="M1 2.5H15L9.5 9V16L6.5 14V9Z" fill="url(#gfun)" stroke="#8a909c" stroke-width="0.8"/><ellipse cx="8" cy="2.8" rx="6.8" ry="1.4" fill="#c8ccd6" stroke="#8a909c" stroke-width="0.6"/><rect x="3.5" y="7.5" width="6" height="7" fill="#fff" stroke="#303030"/><rect x="4" y="10.2" width="5" height="1.6" fill="#e82828"/><rect x="5.5" y="8" width="2" height="2.1" fill="#c8c8c8"/><rect x="7.5" y="9.5" width="8" height="8" fill="#fff" stroke="#303030"/><rect x="8" y="12.6" width="7" height="1.6" fill="#e82828"/><rect x="9.5" y="10" width="4" height="2.4" fill="#c8c8c8"/></svg>
<div class="abs" style="left:144px;top:276px;width:0;height:0;border-left:3px solid transparent;border-right:3px solid transparent;border-top:3px solid #000"></div>
<svg class="ic" style="left:157px;top:268px" width="17" height="17" viewBox="0 0 17 17" opacity="0.85"><path d="M1 2.5H15L9.5 9V16L6.5 14V9Z" fill="url(#gfun)" stroke="#8a909c" stroke-width="0.8"/><ellipse cx="8" cy="2.8" rx="6.8" ry="1.4" fill="#c8ccd6" stroke="#8a909c" stroke-width="0.6"/><path d="M8 9l6.5 6.5M14.5 9l-6.5 6.5" stroke="#8c8c8c" stroke-width="2.6"/><path d="M8 9l6.5 6.5M14.5 9l-6.5 6.5" stroke="#e0e0e0" stroke-width="0.7"/></svg>
<div class="abs" style="left:178px;top:265px;width:24px;height:24px;border:1px solid #8aa4c8;border-radius:3px;background:#fff"></div>
<svg class="ic" style="left:181px;top:268px" width="17" height="17" viewBox="0 0 17 17" ><path d="M1 2.5H15L9.5 9V16L6.5 14V9Z" fill="url(#gfun)" stroke="#8a909c" stroke-width="0.8"/><ellipse cx="8" cy="2.8" rx="6.8" ry="1.4" fill="#c8ccd6" stroke="#8a909c" stroke-width="0.6"/><rect x="8.5" y="5.5" width="7" height="11" rx="1" fill="#c8d0e0" stroke="#404858"/><rect x="10.5" y="8" width="3" height="6" fill="#606878"/><rect x="11.3" y="11.5" width="1.4" height="1.4" fill="#d0d8e8"/></svg>
<div class="abs" style="left:205px;top:282px;width:0;height:0;border-left:3px solid transparent;border-right:3px solid transparent;border-top:3px solid #000"></div>
<div class="abs" style="left:4px;top:291px;width:253px;height:271px;border:1px solid #7f9db9;background:#ece9d8"></div>
<div class="abs" style="left:118px;top:292px;width:1px;height:19px;background:#aca899"></div>
<div class="t" style="left:36px;top:296px;width:79px;overflow:hidden;letter-spacing:-0.15px">Date Range</div>
<div class="abs" style="left:221px;top:295px;width:15px;height:14px;border:1px solid #fff;border-radius:2px;background:linear-gradient(135deg,#d4e0fc,#b8ccf6)"></div>
<svg class="ic" style="left:221px;top:295px" width="15" height="14" viewBox="0 0 15 14" ><path d="M4.0 5.0l3.5 3.5 3.5-3.5" stroke="#4d6185" stroke-width="2" fill="none"/></svg>
<div class="abs" style="left:6px;top:311px;width:232px;height:1px;background:repeating-linear-gradient(90deg,#a0a0a0 0 1px,transparent 1px 2px)"></div>
<div class="abs" style="left:118px;top:311px;width:1px;height:19px;background:#aca899"></div>
<div class="t" style="left:36px;top:315px;width:79px;overflow:hidden;letter-spacing:-0.15px">Date Created</div>
<div class="abs" style="left:221px;top:314px;width:15px;height:14px;border:1px solid #fff;border-radius:2px;background:linear-gradient(135deg,#d4e0fc,#b8ccf6)"></div>
<svg class="ic" style="left:221px;top:314px" width="15" height="14" viewBox="0 0 15 14" ><path d="M4.0 5.0l3.5 3.5 3.5-3.5" stroke="#4d6185" stroke-width="2" fill="none"/></svg>
<div class="abs" style="left:6px;top:330px;width:232px;height:1px;background:repeating-linear-gradient(90deg,#a0a0a0 0 1px,transparent 1px 2px)"></div>
<div class="abs" style="left:118px;top:330px;width:1px;height:19px;background:#aca899"></div>
<div class="t" style="left:36px;top:334px;width:79px;overflow:hidden;letter-spacing:-0.15px">Date Last Modified</div>
<div class="abs" style="left:221px;top:333px;width:15px;height:14px;border:1px solid #fff;border-radius:2px;background:linear-gradient(135deg,#d4e0fc,#b8ccf6)"></div>
<svg class="ic" style="left:221px;top:333px" width="15" height="14" viewBox="0 0 15 14" ><path d="M4.0 5.0l3.5 3.5 3.5-3.5" stroke="#4d6185" stroke-width="2" fill="none"/></svg>
<div class="abs" style="left:6px;top:349px;width:232px;height:1px;background:repeating-linear-gradient(90deg,#a0a0a0 0 1px,transparent 1px 2px)"></div>
<div class="abs" style="left:118px;top:349px;width:1px;height:19px;background:#aca899"></div>
<div class="t" style="left:36px;top:353px;width:79px;overflow:hidden;letter-spacing:-0.15px">Date Started</div>
<div class="abs" style="left:221px;top:352px;width:15px;height:14px;border:1px solid #fff;border-radius:2px;background:linear-gradient(135deg,#d4e0fc,#b8ccf6)"></div>
<svg class="ic" style="left:221px;top:352px" width="15" height="14" viewBox="0 0 15 14" ><path d="M4.0 5.0l3.5 3.5 3.5-3.5" stroke="#4d6185" stroke-width="2" fill="none"/></svg>
<div class="abs" style="left:6px;top:368px;width:232px;height:1px;background:repeating-linear-gradient(90deg,#a0a0a0 0 1px,transparent 1px 2px)"></div>
<div class="abs" style="left:118px;top:368px;width:1px;height:19px;background:#aca899"></div>
<div class="t" style="left:36px;top:372px;width:79px;overflow:hidden;letter-spacing:-0.15px">Date Completed</div>
<div class="abs" style="left:221px;top:371px;width:15px;height:14px;border:1px solid #fff;border-radius:2px;background:linear-gradient(135deg,#d4e0fc,#b8ccf6)"></div>
<svg class="ic" style="left:221px;top:371px" width="15" height="14" viewBox="0 0 15 14" ><path d="M4.0 5.0l3.5 3.5 3.5-3.5" stroke="#4d6185" stroke-width="2" fill="none"/></svg>
<div class="abs" style="left:6px;top:387px;width:232px;height:1px;background:repeating-linear-gradient(90deg,#a0a0a0 0 1px,transparent 1px 2px)"></div>
<div class="abs" style="left:9px;top:393px;width:9px;height:9px;border:1px solid #7f9db9;background:linear-gradient(#fff,#d8d4c4)"></div><div class="abs" style="left:11px;top:397px;width:5px;height:1px;background:#000"></div>
<div class="t" style="left:24px;top:391px;font-weight:bold;letter-spacing:0.3px">By Resource</div>
<div class="abs" style="left:6px;top:406px;width:232px;height:1px;background:repeating-linear-gradient(90deg,#a0a0a0 0 1px,transparent 1px 2px)"></div>
<div class="abs" style="left:118px;top:406px;width:1px;height:19px;background:#aca899"></div>
<div class="t" style="left:36px;top:410px;width:79px;overflow:hidden;letter-spacing:-0.15px">Owner</div>
<div class="abs" style="left:221px;top:409px;width:15px;height:14px;border:1px solid #fff;border-radius:2px;background:linear-gradient(135deg,#d4e0fc,#b8ccf6)"></div>
<svg class="ic" style="left:221px;top:409px" width="15" height="14" viewBox="0 0 15 14" ><path d="M4.0 5.0l3.5 3.5 3.5-3.5" stroke="#4d6185" stroke-width="2" fill="none"/></svg>
<div class="abs" style="left:118px;top:425px;width:1px;height:19px;background:#aca899"></div>
<div class="abs" style="left:119px;top:426px;width:119px;height:18px;background:#fff"></div>
<div class="abs" style="left:5px;top:425px;width:233px;height:1px;background:#716f64"></div><div class="abs" style="left:5px;top:426px;width:233px;height:1px;background:#aca899"></div>
<div class="abs" style="left:5px;top:425px;width:1px;height:19px;background:#716f64"></div><div class="abs" style="left:6px;top:426px;width:1px;height:18px;background:#aca899"></div>
<div class="abs" style="left:5px;top:444px;width:233px;height:1px;background:#fff"></div>
<div class="t" style="left:122px;top:429px;color:#0a1e80">Peter Lawrence</div>
<div class="t" style="left:36px;top:429px;width:79px;overflow:hidden;letter-spacing:-0.15px">Assignment</div>
<div class="abs" style="left:221px;top:428px;width:15px;height:14px;border:1px solid #fff;border-radius:2px;background:linear-gradient(135deg,#d4e0fc,#b8ccf6)"></div>
<svg class="ic" style="left:221px;top:428px" width="15" height="14" viewBox="0 0 15 14" ><path d="M4.0 5.0l3.5 3.5 3.5-3.5" stroke="#4d6185" stroke-width="2" fill="none"/></svg>
<div class="abs" style="left:118px;top:444px;width:1px;height:19px;background:#aca899"></div>
<div class="t" style="left:36px;top:448px;width:79px;overflow:hidden;letter-spacing:-0.15px">Department</div>
<div class="abs" style="left:221px;top:447px;width:15px;height:14px;border:1px solid #fff;border-radius:2px;background:linear-gradient(135deg,#d4e0fc,#b8ccf6)"></div>
<svg class="ic" style="left:221px;top:447px" width="15" height="14" viewBox="0 0 15 14" ><path d="M4.0 5.0l3.5 3.5 3.5-3.5" stroke="#4d6185" stroke-width="2" fill="none"/></svg>
<div class="abs" style="left:6px;top:463px;width:232px;height:1px;background:repeating-linear-gradient(90deg,#a0a0a0 0 1px,transparent 1px 2px)"></div>
<div class="abs" style="left:9px;top:469px;width:9px;height:9px;border:1px solid #7f9db9;background:linear-gradient(#fff,#d8d4c4)"></div><div class="abs" style="left:11px;top:473px;width:5px;height:1px;background:#000"></div>
<div class="t" style="left:24px;top:467px;font-weight:bold;letter-spacing:0.3px">Custom Fields</div>
<div class="abs" style="left:6px;top:482px;width:232px;height:1px;background:repeating-linear-gradient(90deg,#a0a0a0 0 1px,transparent 1px 2px)"></div>
<div class="abs" style="left:118px;top:482px;width:1px;height:19px;background:#aca899"></div>
<div class="t" style="left:36px;top:486px;width:79px;overflow:hidden;letter-spacing:-0.15px">Importance</div>
<div class="abs" style="left:221px;top:485px;width:15px;height:14px;border:1px solid #fff;border-radius:2px;background:linear-gradient(135deg,#d4e0fc,#b8ccf6)"></div>
<svg class="ic" style="left:221px;top:485px" width="15" height="14" viewBox="0 0 15 14" ><path d="M4.0 5.0l3.5 3.5 3.5-3.5" stroke="#4d6185" stroke-width="2" fill="none"/></svg>
<div class="abs" style="left:6px;top:501px;width:232px;height:1px;background:repeating-linear-gradient(90deg,#a0a0a0 0 1px,transparent 1px 2px)"></div>
<div class="abs" style="left:118px;top:501px;width:1px;height:19px;background:#aca899"></div>
<div class="t" style="left:36px;top:505px;width:79px;overflow:hidden;letter-spacing:-0.15px">Billing Information</div>
<div class="abs" style="left:221px;top:504px;width:15px;height:14px;border:1px solid #fff;border-radius:2px;background:linear-gradient(135deg,#d4e0fc,#b8ccf6)"></div>
<svg class="ic" style="left:221px;top:504px" width="15" height="14" viewBox="0 0 15 14" ><path d="M4.0 5.0l3.5 3.5 3.5-3.5" stroke="#4d6185" stroke-width="2" fill="none"/></svg>
<div class="abs" style="left:6px;top:520px;width:232px;height:1px;background:repeating-linear-gradient(90deg,#a0a0a0 0 1px,transparent 1px 2px)"></div>
<div class="abs" style="left:118px;top:520px;width:1px;height:19px;background:#aca899"></div>
<div class="t" style="left:36px;top:524px;width:79px;overflow:hidden;letter-spacing:-0.15px">Categories</div>
<div class="abs" style="left:221px;top:523px;width:15px;height:14px;border:1px solid #fff;border-radius:2px;background:linear-gradient(135deg,#d4e0fc,#b8ccf6)"></div>
<svg class="ic" style="left:221px;top:523px" width="15" height="14" viewBox="0 0 15 14" ><path d="M4.0 5.0l3.5 3.5 3.5-3.5" stroke="#4d6185" stroke-width="2" fill="none"/></svg>
<div class="abs" style="left:6px;top:539px;width:232px;height:1px;background:repeating-linear-gradient(90deg,#a0a0a0 0 1px,transparent 1px 2px)"></div>
<div class="abs" style="left:118px;top:539px;width:1px;height:19px;background:#aca899"></div>
<div class="t" style="left:36px;top:543px;width:79px;overflow:hidden;letter-spacing:-0.15px">Required Attendees</div>
<div class="abs" style="left:6px;top:558px;width:232px;height:1px;background:repeating-linear-gradient(90deg,#a0a0a0 0 1px,transparent 1px 2px)"></div>
<div class="abs" style="left:240px;top:292px;width:16px;height:268px;background:linear-gradient(90deg,#f3f1ec,#fdfdfa)"></div>
<div class="abs" style="left:240px;top:293px;width:15px;height:15px;border:1px solid #fff;border-radius:2px;background:linear-gradient(135deg,#d4e0fc,#b8ccf6)"></div>
<svg class="ic" style="left:240px;top:293px" width="15" height="15" viewBox="0 0 15 15" ><path d="M4.0 9.5l3.5-3.5 3.5 3.5" stroke="#4d6185" stroke-width="2" fill="none"/></svg>
<div class="abs" style="left:240px;top:354px;width:15px;height:76px;border:1px solid #fff;border-radius:2px;background:linear-gradient(135deg,#d4e0fc,#b8ccf6)"></div>
<svg class="ic" style="left:240px;top:354px" width="15" height="76" viewBox="0 0 15 76" ><path d="M4 35.5h7" stroke="#8aa0e0" stroke-width="1"/><path d="M4 37.5h7" stroke="#8aa0e0" stroke-width="1"/><path d="M4 39.5h7" stroke="#8aa0e0" stroke-width="1"/><path d="M4 41.5h7" stroke="#8aa0e0" stroke-width="1"/></svg>
<div class="abs" style="left:240px;top:544px;width:14px;height:16px;border:1px solid #fff;border-radius:2px;background:linear-gradient(135deg,#d4e0fc,#b8ccf6)"></div>
<svg class="ic" style="left:240px;top:544px" width="14" height="16" viewBox="0 0 14 16" ><path d="M3.5 6.0l3.5 3.5 3.5-3.5" stroke="#4d6185" stroke-width="2" fill="none"/></svg>
<div class="abs" style="left:258px;top:98px;width:1019px;height:467px;background:#fff"></div>
<div class="abs" style="left:258px;top:99px;width:1px;height:465px;background:#dcdad0"></div>
<div class="abs" style="left:1277px;top:97px;width:1px;height:469px;background:#8c979a"></div>
<div class="abs" style="left:259px;top:102px;width:1017px;height:39px;border:1px solid #aca899;border-bottom:none;background:#aca899"></div>
<div class="abs" style="left:260px;top:103px;width:1015px;height:38px;border:1px solid #f4f2e6;"></div>
<div class="abs" style="left:259px;top:141px;width:1017px;height:3px;background:linear-gradient(#eeebdd,#f3f0e0)"></div>
<div class="abs" style="left:267px;top:109px;width:13px;height:13px;border:1px solid #1c5180;background:linear-gradient(135deg,#dcdcd6,#fff)"></div>
<svg class="ic" style="left:267px;top:109px" width="13" height="13" viewBox="0 0 13 13" ><path d="M3 6l2.5 3 4.5-5.5" stroke="#21a121" stroke-width="2" fill="none"/></svg>
<div class="t" style="left:282px;top:109px;color:#fff">Current filter:</div>
<div class="t" style="left:406px;top:109px;color:#fff;letter-spacing:-0.05px">(Task Group  (Customers)) and (Status  (Created)) and (Resource  (Peter Lawrence))</div>
<div class="abs" style="left:259px;top:144px;width:1017px;height:420px;border:1px solid #7f9db9;background:#fff"></div>
<div class="abs" style="left:260px;top:145px;width:1015px;height:35px;background:#aca899"></div>
<div class="t" style="left:267px;top:156px;color:#ece9d8">Drag a column header here to group by that column</div>
<div class="abs" style="left:260px;top:180px;width:1015px;height:18px;background:linear-gradient(#f3f1e8 0,#ece9d8 2px,#ece9d8 14px,#e6e3d2 15px,#e6e3d2 16px)"></div>
<div class="abs" style="left:260px;top:196px;width:1015px;height:1px;background:#d6d2c0"></div><div class="abs" style="left:260px;top:197px;width:1015px;height:1px;background:#c8c4b0"></div>
<div class="t" style="left:260px;top:184px;width:55px;text-align:center;letter-spacing:0px">ID</div>
<div class="abs" style="left:314px;top:183px;width:1px;height:12px;background:#c7c3b0"></div><div class="abs" style="left:315px;top:183px;width:1px;height:12px;background:#fff"></div>
<div class="t" style="left:315px;top:184px;width:173px;text-align:center;letter-spacing:0px">Name</div>
<div class="abs" style="left:487px;top:183px;width:1px;height:12px;background:#c7c3b0"></div><div class="abs" style="left:488px;top:183px;width:1px;height:12px;background:#fff"></div>
<div class="t" style="left:490px;top:184px;width:79px;text-align:center">Status</div>
<div class="abs" style="left:571px;top:183px;width:13px;height:12px;background:linear-gradient(135deg,#d4e0fc,#b0c4f4);border:1px solid #fff"></div>
<svg class="ic" style="left:571px;top:183px" width="13" height="12" viewBox="0 0 13 12" ><path d="M3 4l3.5 3.5 3.5-3.5" stroke="#4d6185" stroke-width="2" fill="none"/></svg>
<div class="abs" style="left:586px;top:183px;width:1px;height:12px;background:#c7c3b0"></div><div class="abs" style="left:587px;top:183px;width:1px;height:12px;background:#fff"></div>
<div class="t" style="left:589px;top:184px;width:85px;text-align:center">Assigned</div>
<div class="abs" style="left:676px;top:183px;width:13px;height:12px;background:linear-gradient(135deg,#d4e0fc,#b0c4f4);border:1px solid #fff"></div>
<svg class="ic" style="left:676px;top:183px" width="13" height="12" viewBox="0 0 13 12" ><path d="M3 4l3.5 3.5 3.5-3.5" stroke="#4d6185" stroke-width="2" fill="none"/></svg>
<div class="abs" style="left:691px;top:183px;width:1px;height:12px;background:#c7c3b0"></div><div class="abs" style="left:692px;top:183px;width:1px;height:12px;background:#fff"></div>
<div class="t" style="left:692px;top:184px;width:91px;text-align:center;letter-spacing:-0.25px">Customer Name</div>
<div class="abs" style="left:782px;top:183px;width:1px;height:12px;background:#c7c3b0"></div><div class="abs" style="left:783px;top:183px;width:1px;height:12px;background:#fff"></div>
<div class="t" style="left:783px;top:184px;width:71px;text-align:center;letter-spacing:0px">Customer ID</div>
<div class="abs" style="left:853px;top:183px;width:1px;height:12px;background:#c7c3b0"></div><div class="abs" style="left:854px;top:183px;width:1px;height:12px;background:#fff"></div>
<div class="t" style="left:854px;top:184px;width:107px;text-align:center;letter-spacing:0px">Office Location</div>
<div class="abs" style="left:960px;top:183px;width:1px;height:12px;background:#c7c3b0"></div><div class="abs" style="left:961px;top:183px;width:1px;height:12px;background:#fff"></div>
<div class="t" style="left:961px;top:184px;width:146px;text-align:center;letter-spacing:-0.2px">Business Address</div>
<div class="abs" style="left:1106px;top:183px;width:1px;height:12px;background:#c7c3b0"></div><div class="abs" style="left:1107px;top:183px;width:1px;height:12px;background:#fff"></div>
<div class="t" style="left:1107px;top:184px;width:168px;text-align:center;letter-spacing:0px">Mileage</div>
<div class="abs" style="left:260px;top:198px;width:1015px;height:22px;background:#ece9d8"></div>
<div class="abs" style="left:260px;top:220px;width:1015px;height:1px;background:#aca899"></div>
<div class="abs" style="left:315px;top:198px;width:1px;height:22px;background:#aca899"></div>
<div class="abs" style="left:488px;top:198px;width:1px;height:22px;background:#aca899"></div>
<div class="abs" style="left:587px;top:198px;width:1px;height:22px;background:#aca899"></div>
<div class="abs" style="left:692px;top:198px;width:1px;height:22px;background:#aca899"></div>
<div class="abs" style="left:783px;top:198px;width:1px;height:22px;background:#aca899"></div>
<div class="abs" style="left:854px;top:198px;width:1px;height:22px;background:#aca899"></div>
<div class="abs" style="left:961px;top:198px;width:1px;height:22px;background:#aca899"></div>
<div class="abs" style="left:1107px;top:198px;width:1px;height:22px;background:#aca899"></div>
<div class="t" style="left:260px;width:53px;text-align:right;top:204px">36</div>
<div class="t" style="left:317px;top:204px;letter-spacing:-0.08px">Make arrangmenets with the client</div>
<svg class="ic" style="left:491px;top:201px" width="18" height="17" viewBox="0 0 18 17" ><rect x="7.5" y="0.5" width="10" height="14" fill="#f0f0f0" stroke="#d0d0d0"/><path d="M7.50 1.70L8.99 4.90L12.31 3.69L11.10 7.01L14.30 8.50L11.10 9.99L12.31 13.31L8.99 12.10L7.50 15.30L6.01 12.10L2.69 13.31L3.90 9.99L0.70 8.50L3.90 7.01L2.69 3.69L6.01 4.90Z" fill="#ffb000" stroke="#f8a050" stroke-width="0.6"/><circle cx="7.5" cy="8.5" r="3" fill="#ffd21a"/></svg>
<div class="t" style="left:511px;top:204px">Created</div>
<div class="t" style="left:589px;top:204px;letter-spacing:-0.15px">Peter Lawrence</div>
<div class="t" style="left:695px;top:204px">William Peters</div>
<div class="t" style="left:783px;width:68px;text-align:right;top:204px">698541</div>
<div class="t" style="left:857px;top:202px">Washington, DC.,</div>
<div class="t" style="left:963px;top:204px">510 18th St. NW</div>
<div class="t" style="left:1107px;width:165px;text-align:right;top:204px;letter-spacing:-0.2px">15.00 miles</div>
<div class="abs" style="left:260px;top:242px;width:1015px;height:1px;background:#aca899"></div>
<div class="abs" style="left:315px;top:220px;width:1px;height:22px;background:#aca899"></div>
<div class="abs" style="left:488px;top:220px;width:1px;height:22px;background:#aca899"></div>
<div class="abs" style="left:587px;top:220px;width:1px;height:22px;background:#aca899"></div>
<div class="abs" style="left:692px;top:220px;width:1px;height:22px;background:#aca899"></div>
<div class="abs" style="left:783px;top:220px;width:1px;height:22px;background:#aca899"></div>
<div class="abs" style="left:854px;top:220px;width:1px;height:22px;background:#aca899"></div>
<div class="abs" style="left:961px;top:220px;width:1px;height:22px;background:#aca899"></div>
<div class="abs" style="left:1107px;top:220px;width:1px;height:22px;background:#aca899"></div>
<div class="t" style="left:260px;width:53px;text-align:right;top:226px">38</div>
<div class="t" style="left:317px;top:226px;letter-spacing:-0.08px">Meet with client</div>
<svg class="ic" style="left:491px;top:223px" width="18" height="17" viewBox="0 0 18 17" ><rect x="7.5" y="0.5" width="10" height="14" fill="#f0f0f0" stroke="#d0d0d0"/><path d="M7.50 1.70L8.99 4.90L12.31 3.69L11.10 7.01L14.30 8.50L11.10 9.99L12.31 13.31L8.99 12.10L7.50 15.30L6.01 12.10L2.69 13.31L3.90 9.99L0.70 8.50L3.90 7.01L2.69 3.69L6.01 4.90Z" fill="#ffb000" stroke="#f8a050" stroke-width="0.6"/><circle cx="7.5" cy="8.5" r="3" fill="#ffd21a"/></svg>
<div class="t" style="left:511px;top:226px">Created</div>
<div class="t" style="left:589px;top:226px;letter-spacing:-0.15px">Peter Lawrence</div>
<div class="t" style="left:695px;top:226px">John Elliot</div>
<div class="t" style="left:783px;width:68px;text-align:right;top:226px">569874</div>
<div class="t" style="left:857px;top:224px">Washington, DC.,</div>
<div class="t" style="left:963px;top:226px">263 New York Ave, NW</div>
<div class="t" style="left:1107px;width:165px;text-align:right;top:226px;letter-spacing:-0.2px">20.00 miles</div>
<div class="abs" style="left:260px;top:264px;width:1015px;height:1px;background:#aca899"></div>
<div class="abs" style="left:315px;top:242px;width:1px;height:22px;background:#aca899"></div>
<div class="abs" style="left:488px;top:242px;width:1px;height:22px;background:#aca899"></div>
<div class="abs" style="left:587px;top:242px;width:1px;height:22px;background:#aca899"></div>
<div class="abs" style="left:692px;top:242px;width:1px;height:22px;background:#aca899"></div>
<div class="abs" style="left:783px;top:242px;width:1px;height:22px;background:#aca899"></div>
<div class="abs" style="left:854px;top:242px;width:1px;height:22px;background:#aca899"></div>
<div class="abs" style="left:961px;top:242px;width:1px;height:22px;background:#aca899"></div>
<div class="abs" style="left:1107px;top:242px;width:1px;height:22px;background:#aca899"></div>
<div class="t" style="left:260px;width:53px;text-align:right;top:248px">37</div>
<div class="t" style="left:317px;top:248px;letter-spacing:-0.08px">Meet with client (1)</div>
<svg class="ic" style="left:491px;top:245px" width="18" height="17" viewBox="0 0 18 17" ><rect x="7.5" y="0.5" width="10" height="14" fill="#f0f0f0" stroke="#d0d0d0"/><path d="M7.50 1.70L8.99 4.90L12.31 3.69L11.10 7.01L14.30 8.50L11.10 9.99L12.31 13.31L8.99 12.10L7.50 15.30L6.01 12.10L2.69 13.31L3.90 9.99L0.70 8.50L3.90 7.01L2.69 3.69L6.01 4.90Z" fill="#ffb000" stroke="#f8a050" stroke-width="0.6"/><circle cx="7.5" cy="8.5" r="3" fill="#ffd21a"/></svg>
<div class="t" style="left:511px;top:248px">Created</div>
<div class="t" style="left:589px;top:248px;letter-spacing:-0.15px">Peter Lawrence</div>
<div class="t" style="left:695px;top:248px">Dan Reed</div>
<div class="t" style="left:783px;width:68px;text-align:right;top:248px">564123</div>
<div class="t" style="left:857px;top:246px">Washington, D.C.,</div>
<div class="t" style="left:963px;top:248px">26 19th St. N.W.</div>
<div class="t" style="left:1107px;width:165px;text-align:right;top:248px;letter-spacing:-0.2px">10.00 miles</div>
<div class="abs" style="left:260px;top:286px;width:1015px;height:1px;background:#aca899"></div>
<div class="abs" style="left:315px;top:264px;width:1px;height:22px;background:#aca899"></div>
<div class="abs" style="left:488px;top:264px;width:1px;height:22px;background:#aca899"></div>
<div class="abs" style="left:587px;top:264px;width:1px;height:22px;background:#aca899"></div>
<div class="abs" style="left:692px;top:264px;width:1px;height:22px;background:#aca899"></div>
<div class="abs" style="left:783px;top:264px;width:1px;height:22px;background:#aca899"></div>
<div class="abs" style="left:854px;top:264px;width:1px;height:22px;background:#aca899"></div>
<div class="abs" style="left:961px;top:264px;width:1px;height:22px;background:#aca899"></div>
<div class="abs" style="left:1107px;top:264px;width:1px;height:22px;background:#aca899"></div>
<div class="t" style="left:260px;width:53px;text-align:right;top:270px">40</div>
<div class="t" style="left:317px;top:270px;letter-spacing:-0.08px">Deliver documents for signing</div>
<svg class="ic" style="left:491px;top:267px" width="18" height="17" viewBox="0 0 18 17" ><rect x="7.5" y="0.5" width="10" height="14" fill="#f0f0f0" stroke="#d0d0d0"/><path d="M7.50 1.70L8.99 4.90L12.31 3.69L11.10 7.01L14.30 8.50L11.10 9.99L12.31 13.31L8.99 12.10L7.50 15.30L6.01 12.10L2.69 13.31L3.90 9.99L0.70 8.50L3.90 7.01L2.69 3.69L6.01 4.90Z" fill="#ffb000" stroke="#f8a050" stroke-width="0.6"/><circle cx="7.5" cy="8.5" r="3" fill="#ffd21a"/></svg>
<div class="t" style="left:511px;top:270px">Created</div>
<div class="t" style="left:589px;top:270px;letter-spacing:-0.15px">Peter Lawrence</div>
<div class="t" style="left:695px;top:270px">Chris Dowdy</div>
<div class="t" style="left:783px;width:68px;text-align:right;top:270px">547812</div>
<div class="t" style="left:857px;top:268px">Washington, DC.,</div>
<div class="t" style="left:963px;top:270px">115 Goldsboro Road</div>
<div class="t" style="left:1107px;width:165px;text-align:right;top:270px;letter-spacing:-0.2px">50.00 miles</div>
<div class="abs" style="left:260px;top:308px;width:1015px;height:1px;background:#aca899"></div>
<div class="abs" style="left:315px;top:286px;width:1px;height:22px;background:#aca899"></div>
<div class="abs" style="left:488px;top:286px;width:1px;height:22px;background:#aca899"></div>
<div class="abs" style="left:587px;top:286px;width:1px;height:22px;background:#aca899"></div>
<div class="abs" style="left:692px;top:286px;width:1px;height:22px;background:#aca899"></div>
<div class="abs" style="left:783px;top:286px;width:1px;height:22px;background:#aca899"></div>
<div class="abs" style="left:854px;top:286px;width:1px;height:22px;background:#aca899"></div>
<div class="abs" style="left:961px;top:286px;width:1px;height:22px;background:#aca899"></div>
<div class="abs" style="left:1107px;top:286px;width:1px;height:22px;background:#aca899"></div>
<div class="t" style="left:260px;width:53px;text-align:right;top:292px">39</div>
<div class="t" style="left:317px;top:292px;letter-spacing:-0.08px">Deliver documents for signing</div>
<svg class="ic" style="left:491px;top:289px" width="18" height="17" viewBox="0 0 18 17" ><rect x="7.5" y="0.5" width="10" height="14" fill="#f0f0f0" stroke="#d0d0d0"/><path d="M7.50 1.70L8.99 4.90L12.31 3.69L11.10 7.01L14.30 8.50L11.10 9.99L12.31 13.31L8.99 12.10L7.50 15.30L6.01 12.10L2.69 13.31L3.90 9.99L0.70 8.50L3.90 7.01L2.69 3.69L6.01 4.90Z" fill="#ffb000" stroke="#f8a050" stroke-width="0.6"/><circle cx="7.5" cy="8.5" r="3" fill="#ffd21a"/></svg>
<div class="t" style="left:511px;top:292px">Created</div>
<div class="t" style="left:589px;top:292px;letter-spacing:-0.15px">Peter Lawrence</div>
<div class="t" style="left:695px;top:292px">Tim White</div>
<div class="t" style="left:783px;width:68px;text-align:right;top:292px">254563</div>
<div class="t" style="left:857px;top:290px">Washington, DC.,</div>
<div class="t" style="left:963px;top:292px">51 7th St. SW</div>
<div class="t" style="left:1107px;width:165px;text-align:right;top:292px;letter-spacing:-0.2px">25.00 miles</div>
<div class="abs" style="left:260px;top:537px;width:1015px;height:1px;background:#aca899"></div>
<div class="abs" style="left:260px;top:538px;width:1015px;height:25px;background:#ece9d8;border-top:1px solid #fff;border-bottom:1px solid #b8b4a0;border-right:1px solid #b8b4a0"></div>
<div class="abs" style="left:262px;top:540px;width:53px;height:21px;background:#f1efe8;border:1px solid;border-color:#8c8a80 #fff #fff #8c8a80;border-radius:2px"></div>
<div class="t" style="left:262px;width:49px;text-align:right;top:545px">5</div>
<div class="abs" style="left:1106px;top:180px;width:174px;height:129px;border:2px solid #ff0000;filter:drop-shadow(4px 4px 2px rgba(0,0,0,0.35))"></div>
</body></html>
